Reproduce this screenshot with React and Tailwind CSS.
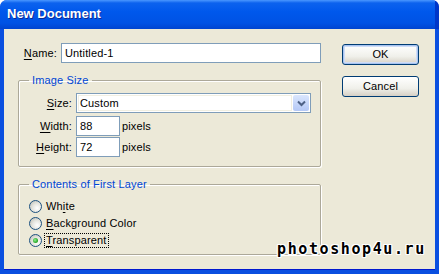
import React from "react";

const U = ({ children }) => <span className="underline underline-offset-[2px]">{children}</span>;

function Radio({ checked, children, focus }) {
  return (
    <div className="flex items-center h-[17px]">
      <div className="w-[13px] h-[13px] rounded-full border border-[#1c5180] bg-[radial-gradient(circle_at_65%_65%,#ffffff_0%,#e6e6e0_45%,#b8b8ae_100%)] flex items-center justify-center">
        {checked && <div className="w-[5px] h-[5px] rounded-full bg-[radial-gradient(circle_at_40%_40%,#8ef08e_0%,#21a121_70%)]" />}
      </div>
      <span className={"ml-[2px] px-[1px] leading-[13px] " + (focus ? "border border-dotted border-black" : "border border-transparent")}>
        {children}
      </span>
    </div>
  );
}

function Field({ className = "", children }) {
  return (
    <div className={"h-[20px] border border-[#7f9db9] bg-white flex items-center pl-[3px] " + className}>
      {children}
    </div>
  );
}

export default function App() {
  return (
    <div
      className="relative w-[439px] h-[274px] flex flex-col bg-[#0a4fe0] rounded-t-[7px] overflow-hidden text-[11px] tracking-[0.15px] text-black"
      style={{ fontFamily: '"Liberation Sans", Arial, sans-serif' }}
    >
      <div className="h-[29px] shrink-0 flex items-center pl-[7px] pb-[2px] bg-[linear-gradient(to_bottom,#4a97ff_0px,#0c62ee_3px,#0058ec_40%,#0052e4_80%,#0044d0_100%)] border-r-[4px] border-[#0036c8]">
        <span className="text-white font-bold text-[13px] tracking-normal [text-shadow:1px_1px_0_#0b2a94]">New Document</span>
      </div>
      <div className="flex-1 flex ml-[4px] mr-[4px] mb-[4px] bg-[#ece9d8] border-b border-[#0019cf]">
        <div className="w-[317px] pl-[14px] flex flex-col">
          <div className="mt-[14px] flex items-center h-[20px]">
            <span className="w-[39px] text-right"><U>N</U>ame:</span>
            <Field className="ml-[4px] w-[260px]">Untitled-1</Field>
          </div>

          <fieldset className="mt-[11px] w-[303px] h-[93px] border border-[#aca899] rounded-[2px] shadow-[inset_1px_1px_0_#ffffff,1px_1px_0_#ffffff]">
            <legend className="ml-[10px] px-[3px] leading-[13px] text-[#0046d5]">Image Size</legend>
            <div className="mt-[6px] flex flex-col">
              <div className="flex items-center h-[20px]">
                <span className="w-[53px] text-right"><U>S</U>ize:</span>
                <div className="ml-[4px] w-[235px] h-[20px] border border-[#7f9db9] bg-white flex">
                  <div className="flex-1 m-[1px] border border-[#f1efe2] flex items-center pl-[1px]">Custom</div>
                  <div className="w-[16px] m-[1px] ml-0 rounded-[2px] bg-[linear-gradient(to_bottom,#dae6fd,#b4c8f6)] flex items-center justify-center">
                    <svg width="9" height="7" viewBox="0 0 9 7">
                      <path d="M1 1.5 L4.5 5 L8 1.5" stroke="#4d6185" strokeWidth="2" fill="none" />
                    </svg>
                  </div>
                </div>
              </div>
              <div className="mt-[3px] flex items-center h-[20px]">
                <span className="w-[53px] text-right"><U>W</U>idth:</span>
                <Field className="ml-[4px] w-[44px]">88</Field>
                <span className="ml-[2px]">pixels</span>
              </div>
              <div className="mt-[1px] flex items-center h-[20px]">
                <span className="w-[53px] text-right"><U>H</U>eight:</span>
                <Field className="ml-[4px] w-[44px]">72</Field>
                <span className="ml-[2px]">pixels</span>
              </div>
            </div>
          </fieldset>

          <fieldset className="mt-[11px] w-[303px] h-[77px] border border-[#aca899] rounded-[2px] shadow-[inset_1px_1px_0_#ffffff,1px_1px_0_#ffffff]">
            <legend className="ml-[10px] px-[3px] leading-[13px] text-[#0046d5]">Contents of First Layer</legend>
            <div className="mt-[7px] ml-[10px] flex flex-col">
              <Radio>Wh<U>i</U>te</Radio>
              <Radio><U>B</U>ackground Color</Radio>
              <Radio checked focus><U>T</U>ransparent</Radio>
            </div>
          </fieldset>
        </div>

        <div className="ml-[21px] mt-[15px] flex flex-col gap-[11px]">
          <button className="w-[77px] h-[21px] rounded-[3px] border border-[#003c74] bg-[linear-gradient(to_bottom,#ffffff,#f0f0ea_60%,#d6d0c5)] shadow-[inset_0_0_0_1px_#a8c4f0,inset_0_0_0_2px_#cfdcf6] text-[11px] leading-none">
            OK
          </button>
          <button className="w-[77px] h-[21px] rounded-[3px] border border-[#003c74] bg-[linear-gradient(to_bottom,#ffffff,#f0f0ea_60%,#d6d0c5)] text-[11px] leading-none">
            Cancel
          </button>
        </div>
      </div>

      <div
        className="absolute left-[277px] top-[242px] text-[15px] font-bold tracking-[1.6px] text-black leading-none [text-shadow:1px_0_0_#fff,-1px_0_0_#fff,0_1px_0_#fff,0_-1px_0_#fff,1px_1px_0_#fff,-1px_-1px_0_#fff,1px_-1px_0_#fff,-1px_1px_0_#fff]"
        style={{ fontFamily: '"DejaVu Sans Mono", monospace' }}
      >
        photoshop4u.ru
      </div>
    </div>
  );
}
